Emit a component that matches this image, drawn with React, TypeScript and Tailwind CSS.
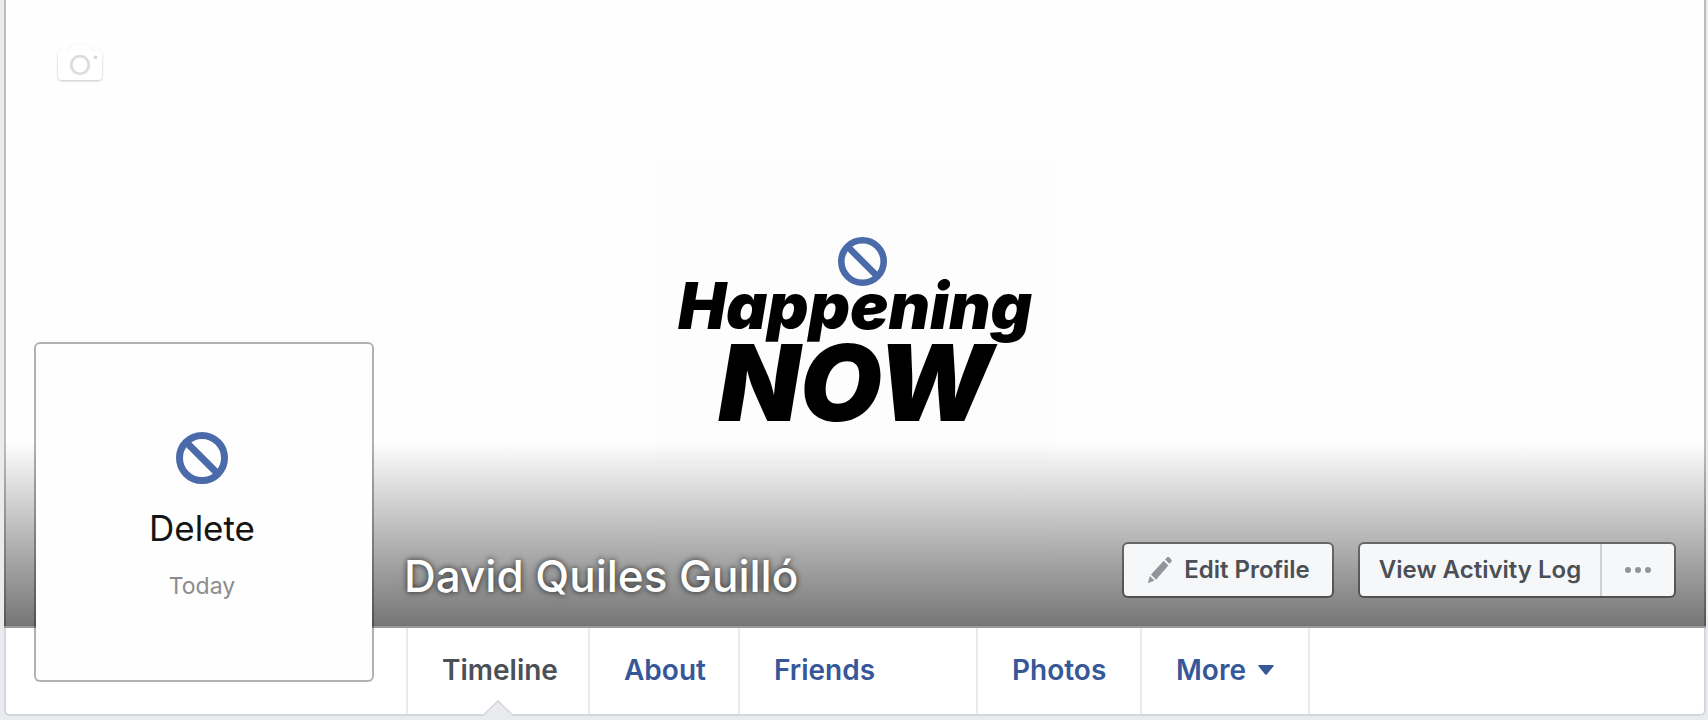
import React from "react";

const tabs = [
  { label: "Timeline", className: "w-[184px]", active: true },
  { label: "About", className: "w-[150px]" },
  { label: "Friends", className: "w-[238px]" },
  { label: "Photos", className: "w-[164px]" },
  { label: "More", className: "w-[168px]", menu: true },
];

const BanIcon = ({ size }: { size: number }) => (
  <svg width={size} height={size} viewBox="0 0 52 52" fill="none" stroke="#4a6aa9">
    <circle cx="26" cy="26" r="22.5" strokeWidth="7" />
    <path d="M11 11l30 30" strokeWidth="7" />
  </svg>
);

const CameraIcon = () => (
  <svg
    width="44"
    height="35"
    viewBox="0 0 44 35"
    className="overflow-visible drop-shadow-[0_1px_1px_rgba(0,0,0,0.22)]"
  >
    <path
      fill="#fff"
      d="M4 6h5c2 0 2.500-1 3.500-3S14 0 16 0h13c2 0 2.500 1 3.500 3S34 6 36 6h4a4 4 0 0 1 4 4v21a4 4 0 0 1-4 4H4a4 4 0 0 1-4-4V10a4 4 0 0 1 4-4z"
    />
    <circle cx="22" cy="20" r="8.800" fill="none" stroke="#dcdcdc" strokeWidth="2.800" />
    <circle cx="37.500" cy="12.200" r="1.800" fill="#d4d4d4" />
  </svg>
);

const PencilIcon = () => (
  <svg width="24" height="26" viewBox="0 0 26 28" fill="#90949c">
    <path d="M18.500 2.500l2-2a2 2 0 0 1 2.800 0l1.800 2a2 2 0 0 1 0 2.800l-2 2z" />
    <path d="M17 4l5 5.200L8.700 24.500 3.300 19z" />
    <path d="M2 20.500l5 5L0.500 28a.5.5 0 0 1-.5-.500z" />
  </svg>
);

const Avatar = () => (
  <div className="absolute bottom-[34px] left-[30px] flex size-[340px] flex-col items-center rounded-md border-2 border-black/30 bg-[#fefefe] bg-clip-padding pt-[88px] pr-1">
    <BanIcon size={52} />
    <p className="mt-[22px] text-[35px] leading-[44px] text-[#141414]">Delete</p>
    <p className="mt-[22px] text-[23px] leading-[28px] text-[#8a8c8f]">Today</p>
  </div>
);

const CoverArt = () => (
  <div className="flex h-[400px] w-[400px] flex-col items-center bg-[#fdfdfd] pt-[77px] font-black text-black italic">
    <div className="pl-3.5">
      <BanIcon size={49} />
    </div>
    <p className="text-[64px] leading-[40px]">Happening</p>
    <p className="text-[106px] leading-[114px]">NOW</p>
  </div>
);

const App = () => {
  return (
    <main className="min-h-screen bg-[#e9ebee] pr-0.5 pb-1 pl-1 font-['Inter',sans-serif]">
      <div className="relative">
        <header className="relative flex h-[628px] flex-col items-center border-b-2 border-[#999] bg-[#fefefe] pt-[160px]">
          <CoverArt />
          <div className="absolute inset-x-0 bottom-0 h-[184px] bg-linear-to-b from-black/0 to-black/54" />
          <div className="absolute inset-0 border-x-2 border-black/26" />
          <button aria-label="Update cover photo" className="absolute top-[45px] left-[54px]">
            <CameraIcon />
          </button>
          <div className="absolute right-[30px] bottom-7 left-[400px] flex items-end justify-between">
            <h1 className="text-[44px] leading-[44px] font-medium text-white [text-shadow:0_0_6px_rgba(0,0,0,0.8)]">
              David Quiles Guilló
            </h1>
            <div className="flex gap-6 text-[24px] leading-[28px] font-semibold text-[#4b4f56]">
              <button className="flex h-14 w-[212px] items-center justify-center gap-3 rounded-md border-2 border-black/42 bg-[#f6f7f9] bg-clip-padding pl-0.5">
                <PencilIcon />
                Edit Profile
              </button>
              <div className="flex h-14 rounded-md border-2 border-black/42 bg-[#f6f7f9] bg-clip-padding">
                <button className="w-[242px] border-r-2 border-[#ced0d4]">View Activity Log</button>
                <button aria-label="More options" className="flex w-[72px] items-center justify-center gap-1">
                  <span className="size-1.5 rounded-full bg-[#90949c]" />
                  <span className="size-1.5 rounded-full bg-[#90949c]" />
                  <span className="size-1.5 rounded-full bg-[#90949c]" />
                </button>
              </div>
            </div>
          </div>
        </header>
        <nav className="flex h-[88px] rounded-b-md border-x-2 border-b-2 border-[#d3d6db] bg-white pl-[400px] text-[28px] leading-[32px] font-semibold text-[#365899]">
          {tabs.map((tab, index) => (
            <a
              key={index}
              href="#"
              className={`relative flex items-center border-[#e9ebee] pb-0.5 pl-[34px] ${
                index === 0 ? "border-x-2 text-[#4b4f56]" : "border-r-2"
              } ${tab.className}`}
            >
              {tab.label}
              {tab.menu && (
                <svg width="16" height="10" viewBox="0 0 16 10" className="ml-3" fill="#365899">
                  <path d="M1 0h14q1.500 0 .5 1.200L9 9.200q-1 1.100-2 0L.5 1.200Q-.5 0 1 0z" />
                </svg>
              )}
              {tab.active && (
                <svg
                  width="28"
                  height="16"
                  viewBox="0 0 28 16"
                  className="absolute -bottom-0.5 left-[76px]"
                >
                  <path d="M0 16V14.500L14 1l14 13.500V16z" fill="#e9ebee" />
                  <path d="M0 14.500L14 1l14 13.500" fill="none" stroke="#d3d6db" strokeWidth="1.500" />
                </svg>
              )}
            </a>
          ))}
        </nav>
        <Avatar />
      </div>
    </main>
  );
};

export default App;
